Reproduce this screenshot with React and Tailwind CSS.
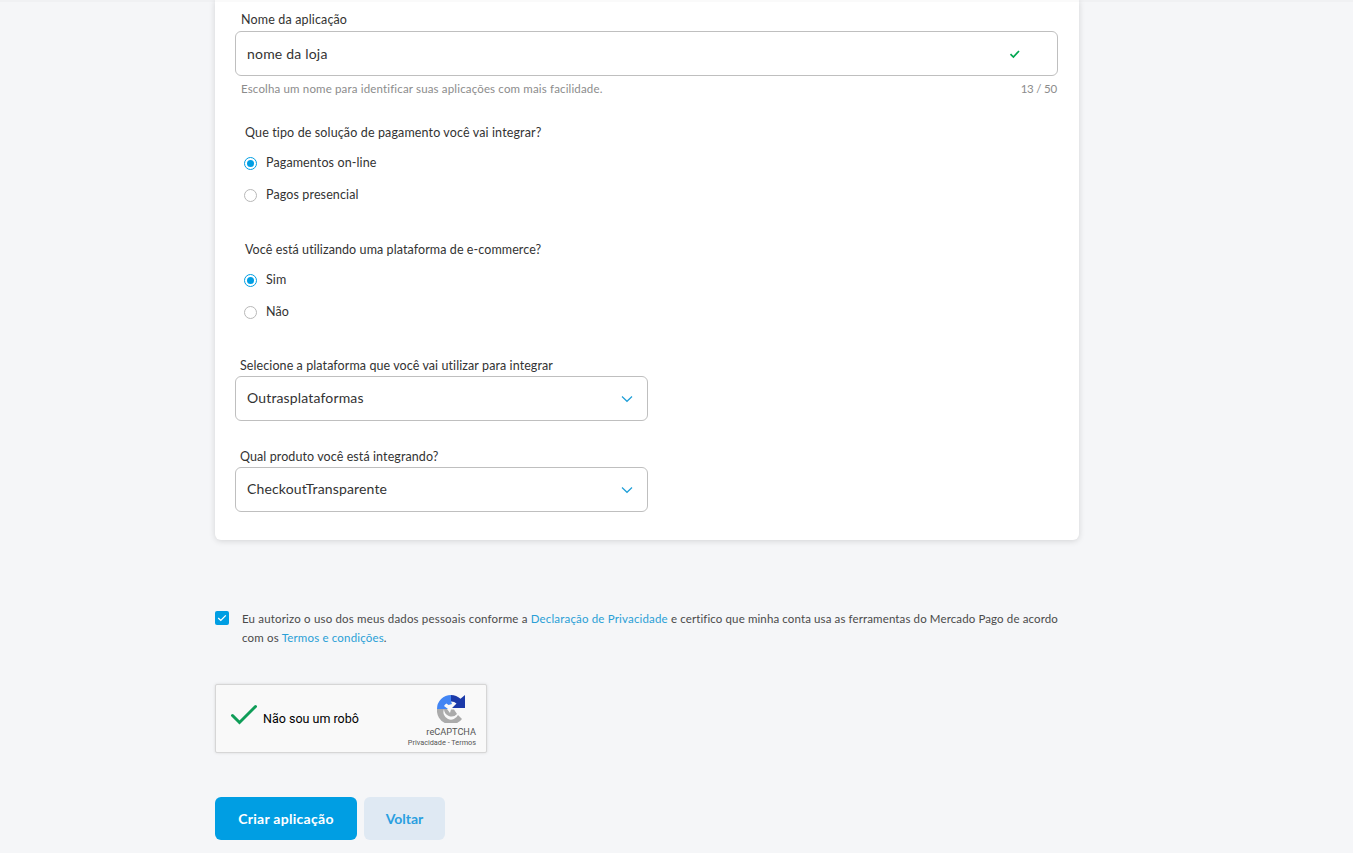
function Radio({ checked, label }) {
  return (
    <div className="flex items-center h-[16px] gap-[9px] pl-[30px]">
      {checked ? (
        <span className="w-[13px] h-[13px] rounded-full border-[1.5px] border-[#009ee3] flex items-center justify-center shrink-0">
          <span className="w-[7px] h-[7px] rounded-full bg-[#009ee3]" />
        </span>
      ) : (
        <span className="w-[13px] h-[13px] rounded-full border border-[#b8b8b8] shrink-0 bg-white" />
      )}
      <span className="text-[12.5px] leading-[16px] text-[#333333] tracking-[0.12px]">{label}</span>
    </div>
  );
}
function Chevron() {
  return (
    <svg width="12" height="8" viewBox="0 0 12 8" fill="none" className="shrink-0">
      <path d="M1 1.5 L6 6.3 L11 1.5" stroke="#1f9fd8" strokeWidth="1.2" />
    </svg>
  );
}
function Select({ label, value }) {
  return (
    <div className="w-[413px]">
      <div className="pl-[5px] pt-[1px] text-[12.5px] leading-[16px] text-[#333333] tracking-[0.09px]">{label}</div>
      <div className="mt-[2px] h-[45px] rounded-[6px] border border-[#bfbfbf] flex items-center justify-between pl-[11px] pr-[14px]">
        <span className="text-[14px] leading-[20px] -mt-[2px] text-[#333333] tracking-[0.15px]">{value}</span>
        <Chevron />
      </div>
    </div>
  );
}
export default function App() {
  return (
    <div className="relative h-[853px] overflow-hidden bg-[#f5f6f8] font-['Lato','Open_Sans',sans-serif]">
      <div className="absolute top-0 left-0 right-0 h-[2px] bg-black/[0.02]" />
      <div className="w-[864px] ml-[215px]">
        <div className="bg-white h-[540px] rounded-b-[6px] shadow-[0_1px_6px_rgba(0,0,0,0.14)] pl-[20px] pr-[21px] pt-[12px]">
          <div className="pl-[6px] text-[12.5px] leading-[16px] text-[#333333] tracking-[0.15px]">Nome da aplicação</div>
          <div className="mt-[3px] h-[45px] rounded-[6px] border border-[#bfbfbf] flex items-center justify-between pl-[11px] pr-[36px]">
            <span className="text-[14px] leading-[20px] text-[#333333] tracking-[0.2px]">nome da loja</span>
            <svg width="12" height="10" viewBox="0 0 12 10" fill="none">
              <path d="M1.5 5.2 L4.4 8 L10 2" stroke="#00a650" strokeWidth="1.7" />
            </svg>
          </div>
          <div className="mt-[5px] flex justify-between pl-[6px] pr-[1px] text-[11.5px] leading-[16px] text-[#8c8c8c] tracking-[0.16px]">
            <span>Escolha um nome para identificar suas aplicações com mais facilidade.</span>
            <span className="tracking-[-0.2px]">13 / 50</span>
          </div>
          <div className="mt-[28px] pl-[10px] text-[12.5px] leading-[16px] text-[#333333] tracking-[0.13px]">Que tipo de solução de pagamento você vai integrar?</div>
          <div className="mt-[14px] flex flex-col gap-[16px] -ml-[21px]">
            <Radio checked label="Pagamentos on-line" />
            <Radio label="Pagos presencial" />
          </div>
          <div className="mt-[39px] pl-[10px] text-[12.5px] leading-[16px] text-[#333333] tracking-[0.09px]">Você está utilizando uma plataforma de e-commerce?</div>
          <div className="mt-[14px] flex flex-col gap-[16px] -ml-[21px]">
            <Radio checked label="Sim" />
            <Radio label="Não" />
          </div>
          <div className="mt-[37px] flex flex-col gap-[27px]">
            <Select label="Selecione a plataforma que você vai utilizar para integrar" value="Outrasplataformas" />
            <Select label="Qual produto você está integrando?" value="CheckoutTransparente" />
          </div>
        </div>

        <div className="mt-[69px] flex items-start gap-[13px]">
          <span className="mt-[2px] w-[14px] h-[14px] rounded-[2px] bg-[#009ee3] flex items-center justify-center shrink-0">
            <svg width="10" height="8" viewBox="0 0 10 8" fill="none">
              <path d="M1.2 4 L3.8 6.4 L8.8 1.4" stroke="#fff" strokeWidth="1.3" />
            </svg>
          </span>
          <p className="text-[11.5px] leading-[19px] text-[#4a4a4a] tracking-[0.175px] w-[825px]">
            Eu autorizo o uso dos meus dados pessoais conforme a <span className="text-[#2a9fd6]">Declaração de Privacidade</span><span className="tracking-[0.12px]"> e certifico que minha conta usa as ferramentas do Mercado Pago de acordo</span> com os <span className="text-[#2a9fd6]">Termos e condições</span>.
          </p>
        </div>

        <div className="mt-[37px] w-[272px] h-[69px] border border-[#d6d6d6] rounded-[2px] bg-[#f9f9f9] shadow-[0_0_3px_rgba(0,0,0,0.12)] flex font-['Roboto',sans-serif]">
          <svg width="28" height="22" viewBox="0 0 28 22" fill="none" className="ml-[14px] mt-[19px] shrink-0">
            <path d="M2.5 11.5 L9.5 18.5 L25.5 2.5" stroke="#0f9d58" strokeWidth="3" strokeLinecap="round" />
          </svg>
          <span className="ml-[5px] mt-[26px] text-[12.5px] leading-[16px] text-black">Não sou um robô</span>
          <div className="ml-auto mr-[10px] mt-[10px] flex flex-col items-end">
            <svg width="28" height="28" viewBox="0 0 28 28" className="mr-[11px]">
              <path d="M14 0 A14 14 0 0 1 23.5 3.8 L28 0 V13 H15 L19.5 8.5 A7.5 7.5 0 0 0 14 6.5 Z" fill="#1c3aa9" />
              <path d="M14 0 V6.5 L15 9 L11.5 10 L9.5 8.5 A7.5 7.5 0 0 0 7 11 L11 14 H0 A14 14 0 0 1 14 0 Z" fill="#4285f4" />
              <path d="M0 14 H7 A7.5 7.5 0 0 0 20 19 L17 14.5 H14 L13 18 L10 14 H0 Z M21 20 L25 24 A14 14 0 0 1 0 14 H7 A7.5 7.5 0 0 0 21 20 Z" fill="#ababab" />
            </svg>
            <span className="text-[9.2px] leading-[11px] mt-[3px] text-[#555555]">reCAPTCHA</span>
            <span className="text-[7.3px] leading-[10px] mt-[1px] text-[#555555]">Privacidade - Termos</span>
          </div>
        </div>

        <div className="mt-[44px] flex gap-[7px]">
          <button className="w-[142px] h-[43px] rounded-[6px] bg-[#009ee3] text-white text-[14px] font-bold tracking-[0.28px]">Criar aplicação</button>
          <button className="w-[81px] h-[43px] rounded-[6px] bg-[#dfe9f3] text-[#2a9fe0] text-[14px] font-bold">Voltar</button>
        </div>
      </div>
    </div>
  );
}
